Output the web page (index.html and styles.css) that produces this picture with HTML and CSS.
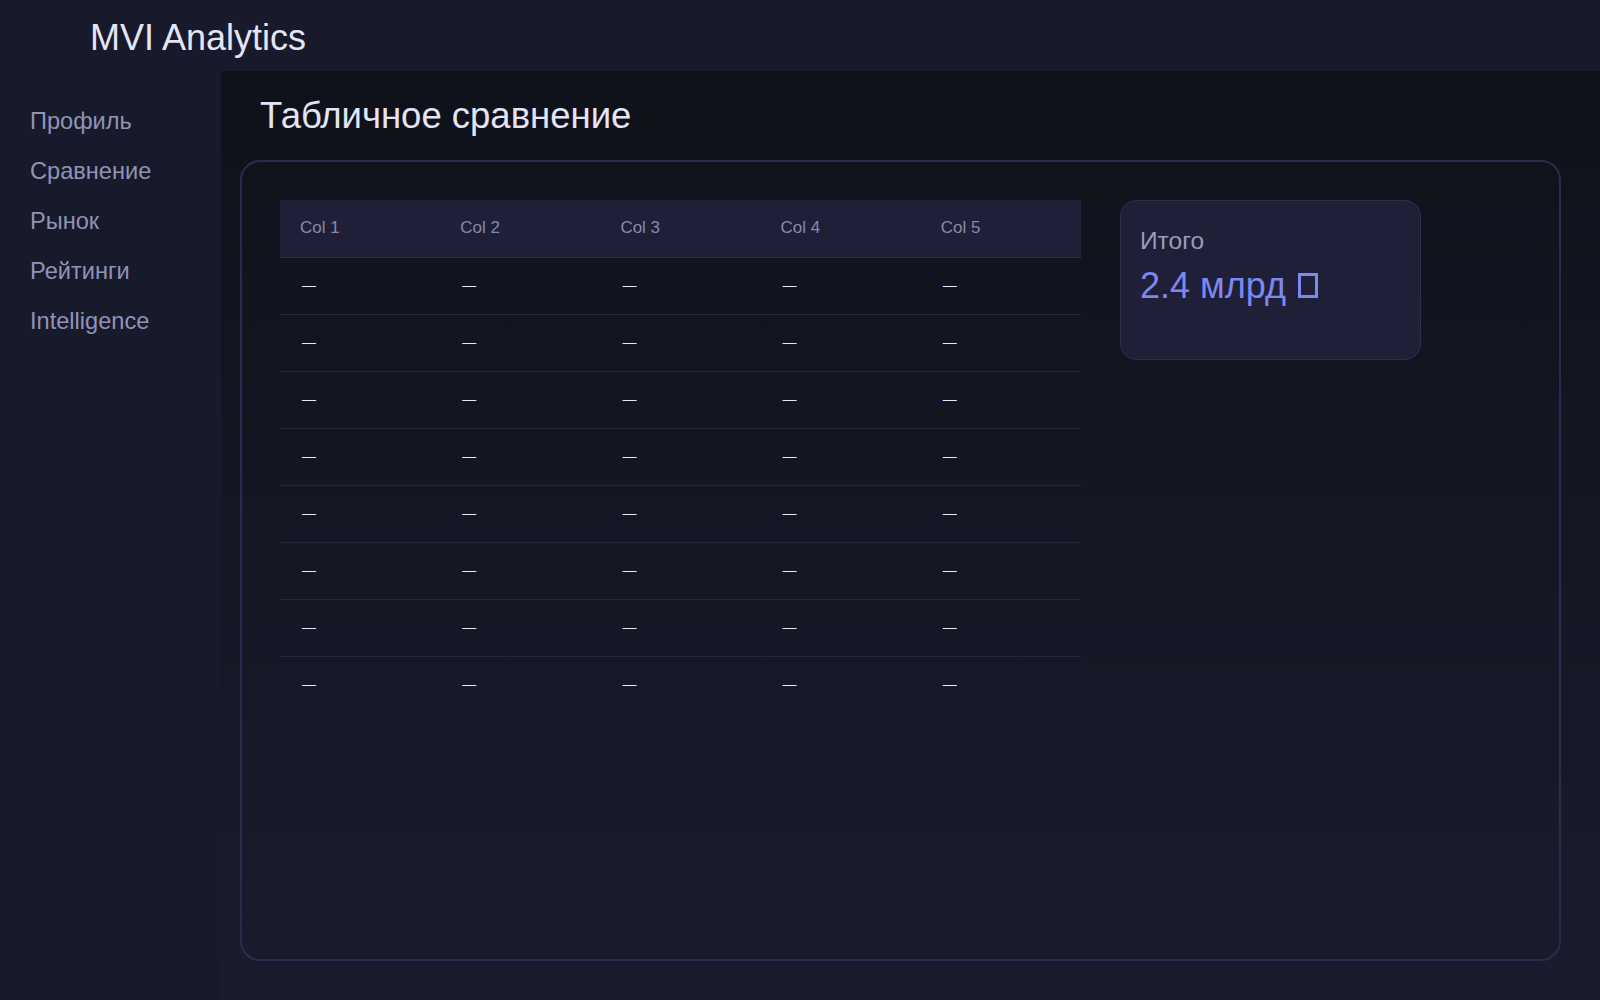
FILE: index.html
```html
<!DOCTYPE html>
<html lang="ru">
  <head>
    <meta charset="UTF-8" />
    <meta name="viewport" content="width=device-width, initial-scale=1.0" />
    <title>MVI Analytics</title>
    <link rel="stylesheet" href="styles.css">
  </head>
  <body>
    <header class="topbar">
      <div class="logo">MVI Analytics</div>
    </header>

    <div class="layout">
      <nav class="sidebar">
        <a href="#">Профиль</a>
        <a href="#">Сравнение</a>
        <a href="#">Рынок</a>
        <a href="#">Рейтинги</a>
        <a href="#">Intelligence</a>
      </nav>

      <main class="main">
        <h1 class="page-title">Табличное сравнение</h1>

        <section class="panel">
          <table class="compare-table">
            <thead>
              <tr>
                <th>Col 1</th>
                <th>Col 2</th>
                <th>Col 3</th>
                <th>Col 4</th>
                <th>Col 5</th>
              </tr>
            </thead>
            <tbody>
              <tr><td>—</td><td>—</td><td>—</td><td>—</td><td>—</td></tr>
              <tr><td>—</td><td>—</td><td>—</td><td>—</td><td>—</td></tr>
              <tr><td>—</td><td>—</td><td>—</td><td>—</td><td>—</td></tr>
              <tr><td>—</td><td>—</td><td>—</td><td>—</td><td>—</td></tr>
              <tr><td>—</td><td>—</td><td>—</td><td>—</td><td>—</td></tr>
              <tr><td>—</td><td>—</td><td>—</td><td>—</td><td>—</td></tr>
              <tr><td>—</td><td>—</td><td>—</td><td>—</td><td>—</td></tr>
              <tr><td>—</td><td>—</td><td>—</td><td>—</td><td>—</td></tr>
            </tbody>
          </table>

          <div class="summary-card">
            <div class="summary-label">Итого</div>
            <div class="summary-value">2.4 млрд <span class="missing-glyph" aria-label="₽"></span></div>
          </div>
        </section>
      </main>
    </div>
  </body>
</html>
```

FILE: styles.css
```css
html {
  box-sizing: border-box;
  font-family: "Liberation Sans", Arial, sans-serif;
  font-size: 16px;
}

*,
*:before,
*:after {
  box-sizing: inherit;
}

body {
  margin: 0;
  padding: 0;
  background-color: #171a2b;
  color: #e3e5f4;
  overflow: hidden;
}

/* ********** barra superior ********** */
.topbar {
  height: 71px;
  display: flex;
  align-items: center;
  padding: 4px 0 0 90px;
  background-color: #181a2c;
}

.logo {
  font-size: 36px;
  color: #e3e5f4;
}

/* ********** layout ********** */
.layout {
  display: grid;
  grid-template-columns: 221px 1fr;
  height: calc(100vh - 71px);
}

.sidebar {
  display: flex;
  flex-direction: column;
  padding-top: 25px;
  background-color: #171a2b;
}

.sidebar a {
  padding: 0 30px;
  font-size: 23.6px;
  line-height: 50px;
  color: #9193b6;
  text-decoration: none;
}

.main {
  display: flex;
  flex-direction: column;
  padding: 24px 39px 39px 19px;
  background: linear-gradient(180deg, #0f111a 0%, #1a1c2e 100%);
}

.page-title {
  margin: 0 0 23px 20px;
  font-size: 36.5px;
  font-weight: normal;
  line-height: 42px;
  color: #e3e5f4;
}

/* ********** panel ********** */
.panel {
  flex: 1;
  display: flex;
  align-items: flex-start;
  gap: 39px;
  padding: 38px;
  border: 2px solid #2b2c4d;
  border-radius: 20px;
  background-color: rgba(255, 255, 255, 0.005);
}

.compare-table {
  width: 801px;
  border-collapse: collapse;
  table-layout: fixed;
}

.compare-table th,
.compare-table td {
  height: 57px;
  padding: 0 20px;
  text-align: left;
  font-weight: normal;
}

.compare-table th {
  font-size: 17px;
  background-color: #1f2038;
  color: #8789ab;
  border-bottom: 1px solid #2c2d4b;
}

.compare-table td {
  padding: 0 20px 2px 22px;
  font-size: 14px;
  color: #e6e8f6;
  border-bottom: 1px solid #26273f;
}

.compare-table tbody tr:last-child td {
  border-bottom: none;
}

.summary-card {
  width: 301px;
  min-height: 160px;
  padding: 27px 19px;
  border: 1px solid #2e2f4d;
  border-radius: 16px;
  background-color: #1f2037;
}

.summary-label {
  margin-bottom: 11px;
  font-size: 24.5px;
  line-height: 26px;
  color: #9a9cbb;
}

.summary-value {
  font-size: 36px;
  color: #7c87f2;
}

.missing-glyph {
  display: inline-block;
  width: 20px;
  height: 25px;
  margin-left: 2px;
  border: 3px solid #7c87f2;
}
```
